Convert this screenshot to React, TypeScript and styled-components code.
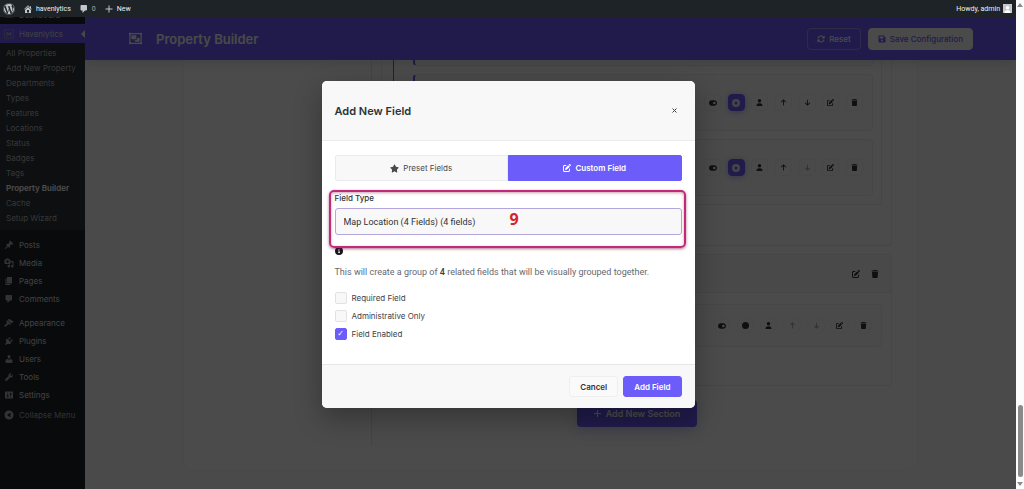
import React from "react";
import styled, { createGlobalStyle, css } from "styled-components";
import {
  FaArrowDown,
  FaArrowUp,
  FaArrowsRotate,
  FaCircle,
  FaCircleDot,
  FaCircleInfo,
  FaFloppyDisk,
  FaPenToSquare,
  FaPlus,
  FaRegObjectGroup,
  FaStar,
  FaToggleOn,
  FaTrash,
  FaUser,
  FaWordpress,
} from "react-icons/fa6";

const purple = "#6c5dfb";
const bodyFont = `Inter, "Liberation Sans", sans-serif`;
const formFont = `Roboto, "Liberation Sans", sans-serif`;

const GlobalStyle = createGlobalStyle`
  * { box-sizing: border-box; }
  body { margin: 0; background: #f8f8f8; font-family: ${bodyFont}; font-size: 8px; color: #3c434a; }
  button, input, select { font: inherit; color: inherit; margin: 0; }
  button { cursor: pointer; }
  svg { display: block; flex: none; }
  a { color: inherit; text-decoration: none; }
  ul { list-style: none; margin: 0; padding: 0; }
`;

const dash = {
  home: "M16 8.5l1.53 1.53-1.06 1.06L10 4.6l-6.47 6.49-1.06-1.06L10 2.5l4 4v-2h2v4zm-6-2.46l6 5.99V18H4v-5.97zM12 17v-5H8v5h4z",
  comments: "M5 2h9c1.1 0 2 .9 2 2v7c0 1.1-.9 2-2 2h-2l-5 5v-5H5c-1.1 0-2-.9-2-2V4c0-1.1.9-2 2-2z",
  post: "M10.44 3.02l1.82-1.82 6.36 6.35-1.83 1.82c-1.05-.68-2.48-.57-3.41.36l-.75.75c-.92.93-1.04 2.35-.35 3.41l-1.83 1.82-2.41-2.41-2.8 2.79c-.42.42-3.38 2.71-3.8 2.29s1.86-3.39 2.28-3.81l2.79-2.79L4.1 9.36l1.83-1.82c1.05.69 2.48.57 3.4-.36l.75-.75c.93-.92 1.05-2.35.36-3.41z",
  users: "M10 9.25c-2.27 0-2.73-3.44-2.73-3.44C7 4.02 7.82 2 9.97 2c2.16 0 2.98 2.02 2.71 3.81 0 0-.41 3.44-2.68 3.44zm0 2.57L12.72 10c2.39 0 4.52 2.33 4.52 4.53v2.49s-3.65 1.13-7.24 1.13c-3.65 0-7.24-1.13-7.24-1.13v-2.49c0-2.25 1.94-4.48 4.47-4.48z",
  tools: "M16.68 9.77c-1.34 1.34-3.3 1.67-4.95.99l-5.41 6.52c-.99.99-2.59.99-3.58 0s-.99-2.59 0-3.57l6.52-5.42c-.68-1.65-.35-3.61.99-4.95 1.28-1.28 3.12-1.62 4.72-1.06l-2.89 2.89 2.82 2.82 2.86-2.87c.53 1.58.18 3.39-1.08 4.65zM3.81 16.21c.4.39 1.04.39 1.43 0 .4-.4.4-1.04 0-1.43-.39-.4-1.03-.4-1.43 0-.39.39-.39 1.03 0 1.43z",
  page: "M6 15V2h10v13H6zm-1 1h8v2H3V5h2v11z",
  settings: "M18 16V4c0-.55-.45-1-1-1H3c-.55 0-1 .45-1 1v12c0 .55.45 1 1 1h14c.55 0 1-.45 1-1zM8 11h1c.55 0 1 .45 1 1s-.45 1-1 1H8v1.5c0 .28-.22.5-.5.5s-.5-.22-.5-.5V13H6c-.55 0-1-.45-1-1s.45-1 1-1h1V5.5c0-.28.22-.5.5-.5s.5.22.5.5V11zm5-2h-1c-.55 0-1-.45-1-1s.45-1 1-1h1V5.5c0-.28.22-.5.5-.5s.5.22.5.5V7h1c.55 0 1 .45 1 1s-.45 1-1 1h-1v5.5c0 .28-.22.5-.5.5s-.5-.22-.5-.5V9z",
  plugins: "M13.11 4.36L9.87 7.6 8 5.73l3.24-3.24c.35-.34 1.05-.2 1.56.32.52.51.66 1.21.31 1.55zm-8 1.77l.91-1.12 9.01 9.01-1.19.84c-.71.71-2.63 1.16-3.82 1.16H6.14L4.9 17.26c-.59.59-1.54.59-2.12 0-.59-.58-.59-1.53 0-2.12l1.24-1.24v-3.88c0-1.13.4-3.19 1.09-3.89zm7.26 3.97l3.24-3.24c.34-.35 1.04-.21 1.55.31.52.51.66 1.21.31 1.55l-3.24 3.25z",
  appearance: "M14.48 11.06L7.41 3.99l1.5-1.5c.5-.56 2.3-.47 3.51.32 1.21.8 1.43 1.28 2.91 2.1 1.18.64 2.45 1.26 4.45.85zm-.71.71L6.7 4.7 4.93 6.47c-.39.39-.39 1.02 0 1.41l1.06 1.06c.39.39.39 1.03 0 1.42-.6.6-1.43 1.11-2.21 1.69-.35.26-.7.53-1.01.84C1.43 14.23.4 16.08 1.4 17.07c.99 1 2.84-.03 4.18-1.36.31-.31.58-.66.85-1.02.57-.78 1.08-1.61 1.69-2.21.39-.39 1.02-.39 1.41 0l1.06 1.06c.39.39 1.02.39 1.41 0z",
  media: "M13 11V4c0-.55-.45-1-1-1h-1.67L9 1H5L3.67 3H2c-.55 0-1 .45-1 1v7c0 .55.45 1 1 1h10c.55 0 1-.45 1-1zM7 4.5c1.38 0 2.5 1.12 2.5 2.5S8.38 9.5 7 9.5 4.5 8.38 4.5 7 5.62 4.5 7 4.5zM14 6h5v10.5c0 1.38-1.12 2.5-2.5 2.5S14 17.88 14 16.5s1.12-2.5 2.5-2.5c.17 0 .34.02.5.05V9h-3V6zm-4 8.05V13h2v3.5c0 1.38-1.12 2.5-2.5 2.5S7 17.88 7 16.5 8.12 14 9.5 14c.17 0 .34.02.5.05z",
  plus: "M17 9v2h-6v6H9v-6H3V9h6V3h2v6h6z",
  collapse: "M10 1a9 9 0 1 0 0 18 9 9 0 0 0 0-18zm3 4v10l-7-5z",
  dashboard: "M10 2a9 9 0 0 0-8 13h16a9 9 0 0 0-8-13z",
  haven: "M1 1h18v18H1zM2 2v16h16V2zM5 6v9h2v-5l3 3 3-3v5h2V6h-2l-3 3-3-3z",
};

function Dash({ name, size = 10 }: { name: keyof typeof dash; size?: number }) {
  return (
    <svg width={size} height={size} viewBox="0 0 20 20" fill="currentColor" fillRule="evenodd" aria-hidden="true">
      <path d={dash[name]} />
    </svg>
  );
}

/* ---------- frame ---------- */

const Frame = styled.div`
  display: flex;
  height: 100vh;
  overflow: hidden;
`;

const Screen = styled.div`
  position: relative;
  flex: 1;
  min-width: 0;
  display: flex;
  flex-direction: column;
`;

const ScrollTrack = styled.div`
  width: 8px;
  background: #fcfcfc;
  display: flex;
  flex-direction: column;
  align-items: center;
  justify-content: flex-end;
  gap: 5px;
  padding: 3px 0;
`;

const ScrollThumb = styled.div`
  width: 5px;
  height: 72px;
  border-radius: 3px;
  background: #8a8a8a;
`;

const ScrollArrow = styled.span<{ $up?: boolean }>`
  border: 3px solid transparent;
  ${(p) =>
    p.$up
      ? css`border-top: 0; border-bottom: 4px solid #8a8a8a; margin-bottom: auto;`
      : css`border-bottom: 0; border-top: 4px solid #8a8a8a;`}
`;

const AdminBar = styled.nav`
  position: relative;
  z-index: 3;
  display: flex;
  align-items: center;
  gap: 8px;
  height: 17px;
  flex: none;
  padding: 0 4px 0 3px;
  background: #1d2327;
  color: #f0f0f1;
  font-family: ${formFont};
  font-size: 7px;
`;

const BarLink = styled.a<{ $end?: boolean; $muted?: boolean }>`
  display: flex;
  align-items: center;
  gap: 3px;
  white-space: nowrap;
  ${(p) => p.$end && css`margin-left: auto;`}
  span { color: ${(p) => (p.$muted ? "#a7aaad" : "inherit")}; }
  svg { color: #c3c6ca; }
`;

const Avatar = styled.span`
  display: flex;
  align-items: flex-end;
  justify-content: center;
  width: 9px;
  height: 9px;
  background: #c8c8c8;
  svg { color: #fff; }
`;

const Workspace = styled.div`
  flex: 1;
  min-height: 0;
  display: flex;
`;

/* ---------- sidebar ---------- */

const Sidebar = styled.nav`
  width: 85px;
  flex: none;
  overflow: hidden;
  background: #1d2327;
  color: #dcdcde;
`;

const MenuGroup = styled.ul`
  padding-top: 6px;
`;

const MenuLink = styled.a<{ $active?: boolean }>`
  flex: none;
  display: flex;
  align-items: center;
  gap: 5px;
  height: ${(p) => (p.$active ? 19 : 18)}px;
  padding-left: 4px;
  white-space: nowrap;
  background: ${(p) => (p.$active ? purple : "transparent")};
  svg { color: #a7aaad; }
`;

const ActiveNotch = styled.span`
  margin-left: auto;
  border: 4px solid transparent;
  border-left: 0;
  border-right-color: #f0f0f1;
`;

const CutItem = styled.div`
  display: flex;
  flex-direction: column;
  justify-content: flex-end;
  height: 7px;
  overflow: hidden;
`;

const SubMenu = styled.ul`
  padding: 2px 0 5px;
  background: #2c3338;
`;

const SubLink = styled.a<{ $current?: boolean }>`
  display: flex;
  align-items: center;
  height: 15px;
  padding-left: 6px;
  white-space: nowrap;
  color: ${(p) => (p.$current ? "#fff" : "#b4b9be")};
  font-weight: ${(p) => (p.$current ? 600 : 400)};
`;

const CollapseButton = styled.button`
  display: flex;
  align-items: center;
  gap: 5px;
  height: 22px;
  padding: 0 0 0 4px;
  border: 0;
  background: none;
  color: #a7aaad;
  white-space: nowrap;
`;

/* ---------- builder ---------- */

const Main = styled.main`
  flex: 1;
  min-width: 0;
  overflow: hidden;
  background: #f8f8f8;
`;

const PageHeader = styled.header`
  display: flex;
  align-items: center;
  gap: 7px;
  height: 43px;
  padding: 0 43px;
  background: ${purple};
  color: #f4f4f4;
  box-shadow: 0 2px 12px rgba(0, 0, 0, 0.15);
  position: relative;
`;

const PageTitle = styled.h1`
  margin: 0 auto 0 6px;
  font-size: 13px;
  line-height: 16px;
  font-weight: 600;
`;

const HeaderButton = styled.button<{ $solid?: boolean }>`
  display: flex;
  align-items: center;
  justify-content: center;
  gap: 4px;
  height: 22px;
  padding: 0 9px;
  border: 1px solid ${(p) => (p.$solid ? "#f8f8f8" : "rgba(255,255,255,0.3)")};
  border-radius: 4px;
  background: ${(p) => (p.$solid ? "#f8f8f8" : "transparent")};
  color: ${(p) => (p.$solid ? purple : "#f8f8f8")};
  font-size: 8px;
  font-weight: 500;
  white-space: nowrap;
`;

const Panel = styled.section`
  display: flex;
  margin: 0 98px;
  padding: 0 16px 25px 187px;
  background: #fbfbfb;
  border: 1px solid #f2f2f2;
  border-top: 0;
  border-radius: 0 0 12px 12px;
`;

const Column = styled.div`
  flex: 1;
  display: flex;
  flex-direction: column;
  align-items: stretch;
  padding: 0 9px 18px;
  border-left: 1px solid #e4e4e4;
`;

const line = "1px solid #ebebeb";

const Section = styled.article<{ $cut?: boolean }>`
  border: ${line};
  border-radius: ${(p) => (p.$cut ? "0 0 4px 4px" : "4px")};
  ${(p) =>
    p.$cut
      ? css`border-top: 0; padding: 0 9px 40px 11px;`
      : css`margin-top: 8px;`}
`;

const SectionHeader = styled.header`
  display: flex;
  align-items: center;
  justify-content: flex-end;
  gap: 10px;
  height: 38px;
  padding: 0 12px;
  background: #f6f6f6;
  border-bottom: ${line};
`;

const SectionBody = styled.div`
  padding: 11px 9px 38px;
`;

const FieldGroup = styled.div`
  display: flex;
  flex-direction: column;
  gap: 8px;
  padding: 0 8px 8px 19px;
  border: ${line};
  border-top: 0;
  border-left: 1px solid ${purple};
`;

const FieldRow = styled.div<{ $kind?: "cut" | "single" }>`
  display: flex;
  align-items: center;
  justify-content: flex-end;
  height: 57px;
  padding: 0 9px;
  background: #f9f9f9;
  border: ${line};
  border-left: 2px solid ${purple};
  border-radius: 4px;
  ${(p) =>
    p.$kind === "cut" &&
    css`height: 6px; border-top: 0; border-radius: 0 0 4px 4px;`}
  ${(p) => p.$kind === "single" && css`height: 43px; border-left: ${line};`}
`;

const Actions = styled.div`
  display: flex;
  justify-content: space-between;
  width: 159px;
`;

const IconButton = styled.button<{ $on?: boolean; $round?: boolean; $bare?: boolean }>`
  display: flex;
  align-items: center;
  justify-content: center;
  width: ${(p) => (p.$bare ? 9 : 17)}px;
  height: 17px;
  padding: 0;
  border: 1px solid ${(p) => (p.$on ? purple : p.$bare ? "transparent" : "#efefef")};
  border-radius: ${(p) => (p.$round ? "9px" : "4px")};
  background: ${(p) => (p.$on ? purple : "transparent")};
  color: ${(p) => (p.$on ? "#e6e6e6" : "#33333b")};
  box-shadow: ${(p) => (p.$on ? "0 1px 6px rgba(108,93,251,0.5)" : "none")};
  &:disabled { color: #a0a0a0; }
`;

const AddSection = styled.button`
  align-self: center;
  display: flex;
  align-items: center;
  justify-content: center;
  gap: 4px;
  width: 120px;
  height: 27px;
  margin-top: 14px;
  border: 0;
  border-radius: 4px;
  background: ${purple};
  color: #fff;
  font-size: 9px;
  font-weight: 600;
  box-shadow: 0 4px 12px rgba(108, 93, 251, 0.25);
`;

/* ---------- dialog ---------- */

const Backdrop = styled.div`
  position: absolute;
  inset: 0;
  z-index: 2;
  display: flex;
  align-items: center;
  justify-content: center;
  background: rgba(0, 0, 0, 0.7);
`;

const Dialog = styled.div`
  width: 373px;
  max-width: 100%;
  border-radius: 5px;
  overflow: hidden;
  background: #fff;
  box-shadow: 0 10px 28px rgba(0, 0, 0, 0.3);
`;

const DialogHeader = styled.header`
  display: flex;
  align-items: center;
  justify-content: space-between;
  height: 60px;
  padding: 0 13px;
  background: #f8f8f8;
  border-bottom: 1px solid #ebebeb;
`;

const DialogTitle = styled.h2`
  margin: 0;
  font-size: 11px;
  line-height: 14px;
  font-weight: 600;
  color: #2c3338;
`;

const CloseButton = styled.button`
  display: flex;
  align-items: center;
  justify-content: center;
  width: 14px;
  height: 14px;
  padding: 0;
  border: 0;
  background: none;
`;

const DialogBody = styled.div`
  padding: 14px 13px 21px;
`;

const Tabs = styled.div`
  display: grid;
  grid-template-columns: 1fr 1fr;
`;

const Tab = styled.button<{ $active?: boolean }>`
  display: flex;
  align-items: center;
  justify-content: center;
  gap: 4px;
  height: 26px;
  border: 1px solid ${(p) => (p.$active ? purple : "#ebebeb")};
  border-radius: ${(p) => (p.$active ? "0 2px 2px 0" : "2px 0 0 2px")};
  background: ${(p) => (p.$active ? purple : "#f8f8f8")};
  color: ${(p) => (p.$active ? "#fff" : "#4a4a4e")};
  font-weight: ${(p) => (p.$active ? 600 : 400)};
`;

const Field = styled.div`
  position: relative;
  margin-top: 11px;
`;

const Label = styled.label`
  display: block;
  font-weight: 500;
  line-height: 12px;
  color: #2c3338;
`;

const Select = styled.select`
  appearance: none;
  display: block;
  width: 100%;
  height: 27px;
  margin-top: 4px;
  padding: 0 8px;
  border: 1px solid #b3a6dc;
  border-radius: 3px;
  background: #f8f8f8;
  color: #2c3338;
  font-family: ${formFont};
  font-size: 9px;
`;

const Callout = styled.div`
  position: absolute;
  inset: -2px -4px -13px -6px;
  border: 2px solid #c02a78;
  border-radius: 5px;
  box-shadow: 0 1px 3px rgba(120, 20, 70, 0.6), inset 0 1px 3px rgba(120, 20, 70, 0.4);
  display: flex;
  align-items: center;
  justify-content: center;
  padding-left: 14px;
  pointer-events: none;
  color: #d3242b;
  font-family: "Noto Sans", sans-serif;
  font-size: 16px;
  line-height: 20px;
  font-weight: 700;
`;

const Info = styled.div`
  margin-top: 12px;
  color: #16161d;
`;

const Hint = styled.p`
  margin: 10px 0;
  line-height: 14px;
  color: #646970;
  font-family: ${formFont};
  font-size: 9px;
  strong { font-weight: 600; color: #3c434a; }
`;

const CheckRow = styled.label`
  display: flex;
  align-items: center;
  gap: 5px;
  height: 18px;
`;

const CheckBox = styled.input`
  appearance: none;
  display: grid;
  place-items: center;
  width: 12px;
  height: 12px;
  border: 1px solid #e2e2e2;
  border-radius: 2px;
  background: #f8f8f8;
  &:checked { background: ${purple}; border-color: ${purple}; }
  &:checked::before {
    content: "✓";
    color: #fff;
    font: 700 8px/10px "DejaVu Sans", sans-serif;
  }
`;

const DialogFooter = styled.footer`
  display: flex;
  align-items: center;
  justify-content: flex-end;
  gap: 5px;
  height: 44px;
  padding: 0 13px;
  background: #f8f8f8;
  border-top: 1px solid #e6e6e6;
`;

const FooterButton = styled.button<{ $primary?: boolean }>`
  height: 21px;
  padding: 0 10px;
  border: 1px solid ${(p) => (p.$primary ? purple : "#efefef")};
  border-radius: 3px;
  background: ${(p) => (p.$primary ? purple : "#fafafa")};
  color: ${(p) => (p.$primary ? "#fff" : "#33333b")};
  font-weight: 600;
  white-space: nowrap;
`;

const submenu = [
  "All Properties",
  "Add New Property",
  "Departments",
  "Types",
  "Features",
  "Locations",
  "Status",
  "Badges",
  "Tags",
  "Property Builder",
  "Cache",
  "Setup Wizard",
];

type MenuEntry = [keyof typeof dash, string];
const contentMenu: MenuEntry[] = [
  ["post", "Posts"],
  ["media", "Media"],
  ["page", "Pages"],
  ["comments", "Comments"],
];
const siteMenu: MenuEntry[] = [
  ["appearance", "Appearance"],
  ["plugins", "Plugins"],
  ["users", "Users"],
  ["tools", "Tools"],
  ["settings", "Settings"],
];

function Menu({ entries }: { entries: MenuEntry[] }) {
  return (
    <MenuGroup>
      {entries.map(([icon, text]) => (
        <li key={text}>
          <MenuLink href="#">
            <Dash name={icon} />
            {text}
          </MenuLink>
        </li>
      ))}
    </MenuGroup>
  );
}

function FieldActions({ grouped, first, last }: { grouped?: boolean; first?: boolean; last?: boolean }) {
  const round = !grouped;
  return (
    <Actions>
      <IconButton $round={round} aria-label="Toggle required"><FaToggleOn size={8} /></IconButton>
      <IconButton $round={round} $on={grouped} aria-label="Toggle field">
        {grouped ? <FaCircleDot size={8} /> : <FaCircle size={7} />}
      </IconButton>
      <IconButton $round={round} aria-label="Administrative only"><FaUser size={7} /></IconButton>
      <IconButton $round={round} disabled={first} aria-label="Move up"><FaArrowUp size={7} /></IconButton>
      <IconButton $round={round} disabled={last} aria-label="Move down"><FaArrowDown size={7} /></IconButton>
      <IconButton $round={round} aria-label="Edit"><FaPenToSquare size={7} /></IconButton>
      <IconButton $round={round} aria-label="Delete"><FaTrash size={7} /></IconButton>
    </Actions>
  );
}

export default function App() {
  return (
    <>
      <GlobalStyle />
      <Frame>
        <Screen>
          <AdminBar>
            <BarLink href="#" aria-label="WordPress"><FaWordpress size={12} /></BarLink>
            <BarLink href="#"><Dash name="home" /><span>havenlytics</span></BarLink>
            <BarLink href="#" $muted><Dash name="comments" /><span>0</span></BarLink>
            <BarLink href="#"><Dash name="plus" /><span>New</span></BarLink>
            <BarLink href="#" $end>
              <span>Howdy, admin</span>
              <Avatar><FaUser size={7} /></Avatar>
            </BarLink>
          </AdminBar>
          <Workspace>
            <Sidebar>
              <CutItem>
                <MenuLink href="#"><Dash name="dashboard" />Dashboard</MenuLink>
              </CutItem>
              <MenuLink href="#" $active>
                <Dash name="haven" />Havenlytics<ActiveNotch />
              </MenuLink>
              <SubMenu>
                {submenu.map((text) => (
                  <li key={text}>
                    <SubLink href="#" $current={text === "Property Builder"}>{text}</SubLink>
                  </li>
                ))}
              </SubMenu>
              <Menu entries={contentMenu} />
              <Menu entries={siteMenu} />
              <CollapseButton><Dash name="collapse" />Collapse Menu</CollapseButton>
            </Sidebar>
            <Main>
              <PageHeader>
                <FaRegObjectGroup size={15} />
                <PageTitle>Property Builder</PageTitle>
                <HeaderButton><FaArrowsRotate size={8} />Reset</HeaderButton>
                <HeaderButton $solid><FaFloppyDisk size={8} />Save Configuration</HeaderButton>
              </PageHeader>
              <Panel>
                <Column>
                  <Section $cut>
                    <FieldGroup>
                      <FieldRow $kind="cut" />
                      <FieldRow><FieldActions grouped /></FieldRow>
                      <FieldRow><FieldActions grouped last /></FieldRow>
                    </FieldGroup>
                  </Section>
                  <Section>
                    <SectionHeader>
                      <IconButton $bare aria-label="Edit section"><FaPenToSquare size={8} /></IconButton>
                      <IconButton $bare aria-label="Delete section"><FaTrash size={8} /></IconButton>
                    </SectionHeader>
                    <SectionBody>
                      <FieldRow $kind="single"><FieldActions first last /></FieldRow>
                    </SectionBody>
                  </Section>
                  <AddSection><FaPlus size={9} />Add New Section</AddSection>
                </Column>
              </Panel>
            </Main>
          </Workspace>
          <Backdrop>
            <Dialog role="dialog" aria-modal="true" aria-labelledby="dialog-title">
              <DialogHeader>
                <DialogTitle id="dialog-title">Add New Field</DialogTitle>
                <CloseButton aria-label="Close">
                  <svg width="5" height="5" viewBox="0 0 5 5" stroke="currentColor" fill="none">
                    <path d="M.5.5l4 4M4.5.5l-4 4" />
                  </svg>
                </CloseButton>
              </DialogHeader>
              <DialogBody>
                <Tabs>
                  <Tab><FaStar size={9} />Preset Fields</Tab>
                  <Tab $active><FaPenToSquare size={8} />Custom Field</Tab>
                </Tabs>
                <Field>
                  <Label htmlFor="field-type">Field Type</Label>
                  <Select id="field-type" defaultValue="map">
                    <option value="map">Map Location (4 Fields) (4 fields)</option>
                  </Select>
                  <Callout>9</Callout>
                </Field>
                <Info><FaCircleInfo size={8} /></Info>
                <Hint>
                  This will create a group of <strong>4</strong> related fields that will be visually grouped together.
                </Hint>
                <CheckRow><CheckBox type="checkbox" />Required Field</CheckRow>
                <CheckRow><CheckBox type="checkbox" />Administrative Only</CheckRow>
                <CheckRow><CheckBox type="checkbox" defaultChecked />Field Enabled</CheckRow>
              </DialogBody>
              <DialogFooter>
                <FooterButton>Cancel</FooterButton>
                <FooterButton $primary>Add Field</FooterButton>
              </DialogFooter>
            </Dialog>
          </Backdrop>
        </Screen>
        <ScrollTrack>
          <ScrollArrow $up />
          <ScrollThumb />
          <ScrollArrow />
        </ScrollTrack>
      </Frame>
    </>
  );
}
